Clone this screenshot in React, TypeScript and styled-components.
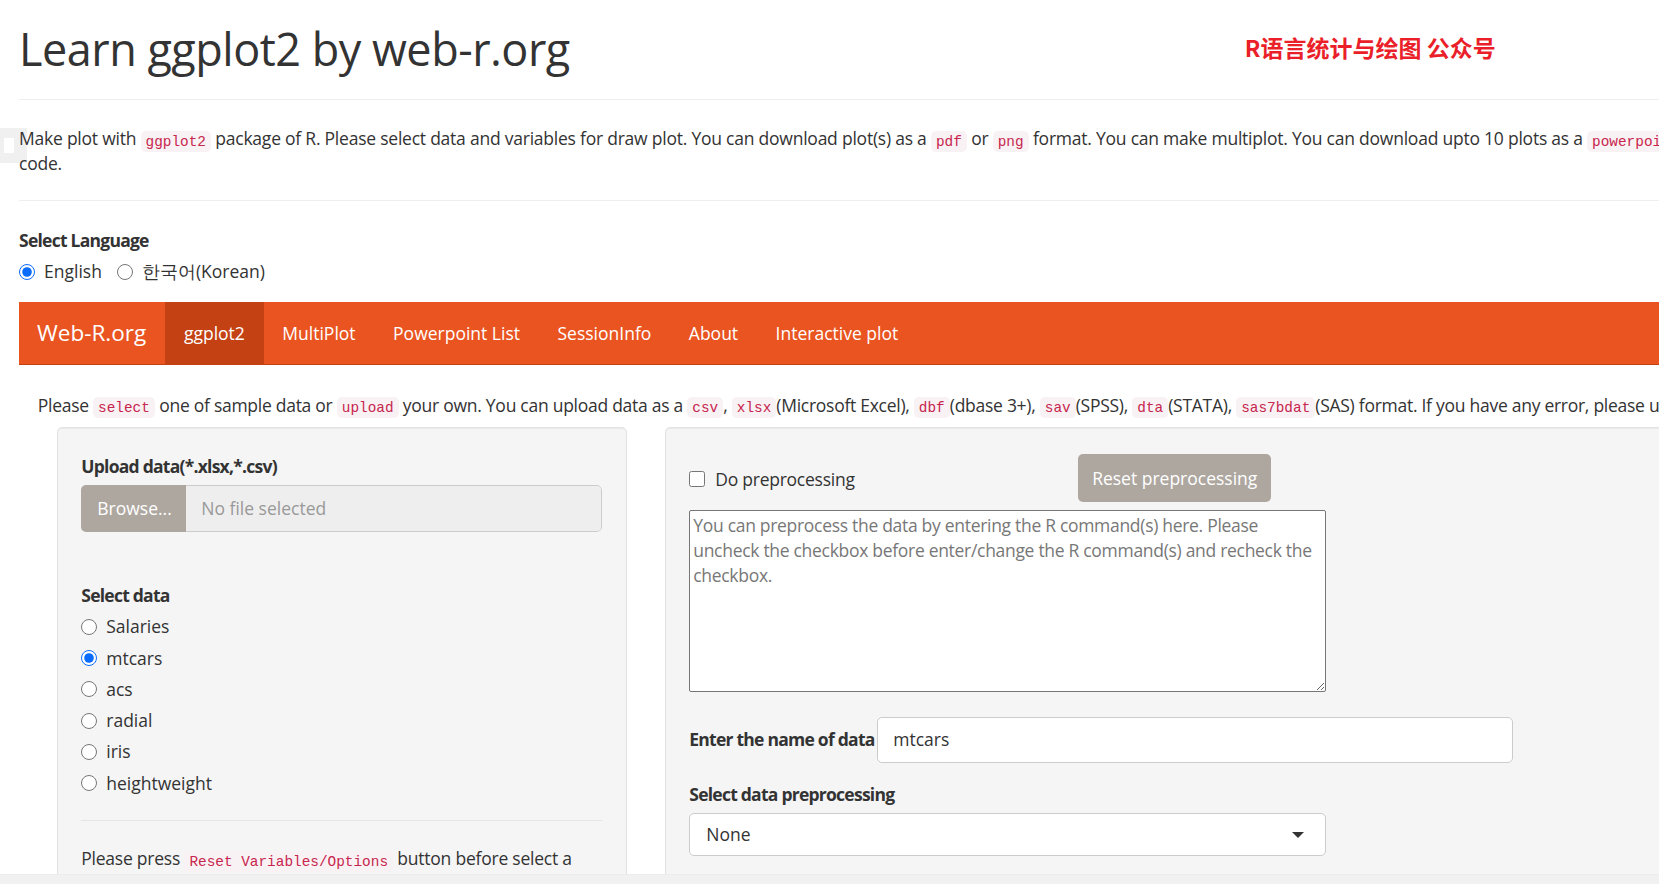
import React from "react";
import styled, { createGlobalStyle } from "styled-components";

const GlobalStyle = createGlobalStyle`
  html {
    margin: 0;
    padding: 0;
    background: #ffffff;
    overflow: hidden;
  }
  body {
    margin: 0;
    padding: 0;
    overflow: hidden;
    font-family: "Open Sans", "Noto Sans", sans-serif;
    font-size: 17.5px;
    line-height: 25px;
    color: #333333;
  }
  * { box-sizing: border-box; }
`;

const Page = styled.div`
  width: 1900px;
  padding: 0 0 0 19px;
`;

const Header = styled.header`
  display: flex;
  align-items: flex-start;
  height: 99px;
  padding-top: 24px;
`;

const Title = styled.h1`
  margin: 0;
  font-size: 45px;
  line-height: 49.5px;
  font-weight: 400;
  color: #333333;
  letter-spacing: -0.5px;
`;

const Watermark = styled.div`
  margin: 11px 0 0 675px;
  font-family: "Noto Sans CJK SC", "Noto Sans", sans-serif;
  font-size: 23px;
  line-height: 24px;
  font-weight: 700;
  color: #ea1f2a;
  white-space: nowrap;
`;

const Rule = styled.div<{ $top: number }>`
  border-top: 1px solid #eeeeee;
  margin-top: ${(p) => p.$top}px;
`;

const Intro = styled.p`
  margin: 26px 0 0;
  white-space: nowrap;
  letter-spacing: -0.23px;
`;

const Code = styled.code`
  font-family: "Liberation Mono", "DejaVu Sans Mono", monospace;
  font-size: 14.4px;
  line-height: 1;
  padding: 2.5px 5px;
  color: #c7254e;
  background: #f9f2f4;
  border-radius: 5px;
  letter-spacing: 0;
`;

const FieldLabel = styled.div`
  font-weight: 700;
  letter-spacing: -0.75px;
  margin-bottom: 6px;
  white-space: nowrap;
`;

const LangGroup = styled.div`
  margin-top: 27px;
`;

const InlineRadios = styled.div`
  display: flex;
  gap: 15px;
`;

const RadioLabel = styled.label`
  display: flex;
  align-items: center;
  height: 25px;
  gap: 9px;
  cursor: pointer;
  white-space: nowrap;
`;

const Radio = styled.input.attrs({ type: "radio" })`
  width: 16px;
  height: 16px;
  margin: 0;
  accent-color: #0a6cff;
`;

const Navbar = styled.nav`
  margin-top: 18px;
  height: 63px;
  display: flex;
  align-items: stretch;
  background: #e95420;
  border-bottom: 1px solid #c34113;
`;

const Brand = styled.div`
  padding: 0 19px 0 18px;
  font-size: 22.5px;
  line-height: 62px;
  color: #ffffff;
`;

const NavItem = styled.div<{ $active?: boolean }>`
  padding: 0 18.75px;
  line-height: 62px;
  color: #ffffff;
  background: ${(p) => (p.$active ? "#c34113" : "transparent")};
  white-space: nowrap;
`;

const TabContent = styled.div`
  padding-left: 18.75px;
`;

const Notice = styled.p`
  margin: 27.5px 0 9.5px;
  white-space: nowrap;
  letter-spacing: -0.27px;
`;

const Columns = styled.div`
  display: grid;
  grid-template-columns: 570px 1178px;
  gap: 38px;
  margin-left: 18.75px;
  align-items: start;
`;

const Well = styled.div`
  background: #f5f5f5;
  border: 1px solid #e3e3e3;
  border-radius: 5px;
  box-shadow: inset 0 1px 1px rgba(0, 0, 0, 0.05);
  padding: 25.75px 23.75px 40px;
  min-height: 520px;
`;

const FileInput = styled.div`
  display: flex;
  height: 47px;
  border-radius: 5px;
  overflow: hidden;
`;

const BrowseButton = styled.div`
  flex: 0 0 105px;
  background: #aea79f;
  color: #ffffff;
  display: flex;
  align-items: center;
  padding-left: 16px;
`;

const FileName = styled.div`
  flex: 1;
  background: #eeeeee;
  border: 1px solid #cccccc;
  border-left: none;
  border-radius: 0 5px 5px 0;
  color: #999999;
  display: flex;
  align-items: center;
  padding-left: 15px;
`;

const DataGroup = styled.div`
  margin-top: 51.5px;
`;

const RadioList = styled.div`
  display: flex;
  flex-direction: column;
  gap: 6.25px;
`;

const InnerRule = styled.div`
  border-top: 1px solid #e5e5e5;
  margin: 24.5px 0 25px;
`;

const HelpText = styled.div`
  letter-spacing: -0.23px;
`;

const CheckRow = styled.div`
  display: grid;
  grid-template-columns: 389px auto;
  align-items: center;
  height: 48px;
`;

const CheckLabel = styled.label`
  display: flex;
  align-items: center;
  gap: 10px;
  padding-top: 3px;
  letter-spacing: -0.25px;
`;

const Checkbox = styled.input.attrs({ type: "checkbox" })`
  width: 16px;
  height: 16px;
  margin: 0;
`;

const GreyButton = styled.button`
  justify-self: start;
  height: 48px;
  width: 193px;
  border: none;
  border-radius: 5px;
  background: #aea79f;
  color: #ffffff;
  font-family: inherit;
  font-size: 17.5px;
  padding: 0;
`;

const TextArea = styled.textarea`
  display: block;
  margin-top: 8px;
  width: 637px;
  height: 182px;
  border: 1px solid #767676;
  border-radius: 2px;
  padding: 2.5px 3px;
  font-family: inherit;
  font-size: 17.5px;
  line-height: 25px;
  letter-spacing: -0.3px;
  color: #333333;
  background: #ffffff;
  resize: vertical;
  &::placeholder {
    color: #777777;
  }
`;

const InlineField = styled.div`
  display: flex;
  align-items: center;
  margin-top: 25px;
`;

const InlineLabel = styled.div`
  font-weight: 700;
  white-space: nowrap;
  width: 188px;
  letter-spacing: -0.75px;
`;

const TextInput = styled.div`
  width: 636px;
  height: 46px;
  background: #ffffff;
  border: 1px solid #cccccc;
  border-radius: 5px;
  display: flex;
  align-items: center;
  padding-left: 15px;
`;

const SelectGroup = styled.div`
  margin-top: 19px;
`;

const SelectBox = styled.div`
  position: relative;
  width: 637px;
  height: 43px;
  background: #ffffff;
  border: 1px solid #cccccc;
  border-radius: 5px;
  display: flex;
  align-items: center;
  padding-left: 16px;
  &::after {
    content: "";
    position: absolute;
    right: 21px;
    top: 18px;
    border-style: solid;
    border-width: 6px 6px 0 6px;
    border-color: #333333 transparent transparent transparent;
  }
`;

const EdgeMark = styled.div`
  position: absolute;
  z-index: -1;
  left: 0;
  top: 128px;
  width: 27px;
  height: 35px;
  background: #f0f0f0;
  &::after {
    content: "";
    position: absolute;
    left: 4px;
    top: 10px;
    width: 10px;
    height: 15px;
    background: #ffffff;
  }
`;

const ScrollTrack = styled.div`
  position: fixed;
  left: 0;
  right: 0;
  bottom: 0;
  height: 10px;
  background: #f1f1f1;
  border-top: 1px solid #ececec;
`;

const dataSets = ["Salaries", "mtcars", "acs", "radial", "iris", "heightweight"];
const navItems = ["ggplot2", "MultiPlot", "Powerpoint List", "SessionInfo", "About", "Interactive plot"];

export default function App() {
  return (
    <>
      <GlobalStyle />
      <EdgeMark />
      <Page>
        <Header>
          <Title>Learn ggplot2 by web-r.org</Title>
          <Watermark>R语言统计与绘图 公众号</Watermark>
        </Header>
        <Rule $top={0} />
        <Intro>
          Make plot with <Code>ggplot2</Code> package of R. Please select data and variables for draw plot. You can
          download plot(s) as a <Code>pdf</Code> or <Code>png</Code> format. You can make multiplot. You can download upto 10
          plots as a <Code>powerpoint</Code> file. You can also get the R
          <br />
          code.
        </Intro>
        <Rule $top={24} />
        <LangGroup>
          <FieldLabel>Select Language</FieldLabel>
          <InlineRadios>
            <RadioLabel>
              <Radio name="lang" defaultChecked />
              English
            </RadioLabel>
            <RadioLabel>
              <Radio name="lang" />
              한국어(Korean)
            </RadioLabel>
          </InlineRadios>
        </LangGroup>
        <Navbar>
          <Brand>Web-R.org</Brand>
          {navItems.map((n, i) => (
            <NavItem key={n} $active={i === 0}>
              {n}
            </NavItem>
          ))}
        </Navbar>
        <TabContent>
          <Notice>
            Please <Code>select</Code> one of sample data or <Code>upload</Code> your own. You can upload data as a{" "}
            <Code>csv</Code>, <Code>xlsx</Code>(Microsoft Excel), <Code>dbf</Code>(dbase 3+), <Code>sav</Code>(SPSS),{" "}
            <Code>dta</Code>(STATA), <Code>sas7bdat</Code>(SAS) format. If you have any error, please use the csv format.
          </Notice>
          <Columns>
            <Well>
              <FieldLabel>Upload data(*.xlsx,*.csv)</FieldLabel>
              <FileInput>
                <BrowseButton>Browse...</BrowseButton>
                <FileName>No file selected</FileName>
              </FileInput>
              <DataGroup>
                <FieldLabel>Select data</FieldLabel>
                <RadioList>
                  {dataSets.map((d) => (
                    <RadioLabel key={d}>
                      <Radio name="data" defaultChecked={d === "mtcars"} />
                      {d}
                    </RadioLabel>
                  ))}
                </RadioList>
              </DataGroup>
              <InnerRule />
              <HelpText>
                Please press <Code>Reset Variables/Options</Code> button before select a new data set.
              </HelpText>
            </Well>
            <Well>
              <CheckRow>
                <CheckLabel>
                  <Checkbox />
                  Do preprocessing
                </CheckLabel>
                <GreyButton>Reset preprocessing</GreyButton>
              </CheckRow>
              <TextArea
                placeholder={
                  "You can preprocess the data by entering the R command(s) here. Please\nuncheck the checkbox before enter/change the R command(s) and recheck the\ncheckbox."
                }
              />
              <InlineField>
                <InlineLabel>Enter the name of data</InlineLabel>
                <TextInput>mtcars</TextInput>
              </InlineField>
              <SelectGroup>
                <FieldLabel>Select data preprocessing</FieldLabel>
                <SelectBox>None</SelectBox>
              </SelectGroup>
            </Well>
          </Columns>
        </TabContent>
      </Page>
      <ScrollTrack />
    </>
  );
}
